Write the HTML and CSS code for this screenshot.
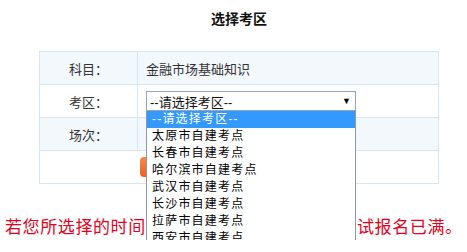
FILE: index.html
```html
<!DOCTYPE html>
<html>
<head>
    <meta charset="UTF-8">
    <title>选择考区</title>
    <link rel="stylesheet" href="styles.css">
</head>
<body>
    <h3 class="title">选择考区</h3>

    <table class="exam-table">
        <tr class="alt">
            <td class="label">科目：</td>
            <td>金融市场基础知识</td>
        </tr>
        <tr>
            <td class="label">考区：</td>
            <td>
                <div class="select-box">
                    <div class="select">
                        <span>--请选择考区--</span>
                        <span class="arrow">▼</span>
                    </div>
                    <ul class="options">
                        <li class="active">--请选择考区--</li>
                        <li>太原市自建考点</li>
                        <li>长春市自建考点</li>
                        <li>哈尔滨市自建考点</li>
                        <li>武汉市自建考点</li>
                        <li>长沙市自建考点</li>
                        <li>拉萨市自建考点</li>
                        <li>西安市自建考点</li>
                    </ul>
                </div>
            </td>
        </tr>
        <tr class="alt">
            <td class="label">场次：</td>
            <td></td>
        </tr>
        <tr>
            <td colspan="2" class="btn-cell">
                <button class="btn">确 定</button>
            </td>
        </tr>
    </table>

    <p class="notice">若您所选择的时间段无法选择，说明该时段考试报名已满。</p>
</body>
</html>
```

FILE: styles.css
```css
body {
    margin: 0;
    font-family: "Liberation Sans", "Noto Sans CJK SC", sans-serif;
    color: #333;
    background-color: #fff;
}

.title {
    margin: 0;
    padding: 10px 0 0 11px;
    height: 41px;
    font-size: 14px;
    line-height: 18px;
    text-align: center;
    color: #111;
}

/* table of subject / area / session */
.exam-table {
    margin-left: 39px;
    width: 400px;
    border-collapse: collapse;
    font-size: 13px;
}

.exam-table td {
    height: 32px;
    padding: 0 0 0 8px;
    border: 1px solid #d6e6f3;
    vertical-align: middle;
}

.exam-table .label {
    width: 97px;
    padding: 0;
    text-align: center;
}

.exam-table tr.alt td {
    background-color: #f3f8fd;
}

.btn-cell {
    padding-left: 100px !important;
}

.btn {
    display: block;
    width: 90px;
    height: 20px;
    border: none;
    border-radius: 4px;
    background: linear-gradient(#f58a4c, #e9621f);
    color: #fff;
    font-size: 13px;
}

/* fake select, shown open */
.select-box {
    position: relative;
    width: 210px;
}

.select {
    display: flex;
    justify-content: space-between;
    align-items: center;
    height: 18px;
    padding: 0 4px 0 3px;
    border: 1px solid #8ea6c8;
    background-color: #fff;
    color: #111;
    font-size: 13px;
}

.arrow {
    font-size: 9px;
    color: #000;
}

.options {
    position: absolute;
    top: 100%;
    left: 0;
    z-index: 5;
    width: 208px;
    margin: 0;
    padding: 0;
    list-style: none;
    border: 1px solid #8b99ab;
    border-top: none;
    background-color: #fff;
}

.options li {
    height: 17px;
    line-height: 17px;
    padding-left: 5px;
    font-size: 12px;
    letter-spacing: 1.2px;
    color: #000;
}

.options li.active {
    background-color: #3399ff;
    color: #fff;
}

.notice {
    margin: 32px 0 0 0;
    padding-left: 5px;
    font-size: 17px;
    letter-spacing: 0.6px;
    line-height: 24px;
    color: #e8001c;
    white-space: nowrap;
}
```
